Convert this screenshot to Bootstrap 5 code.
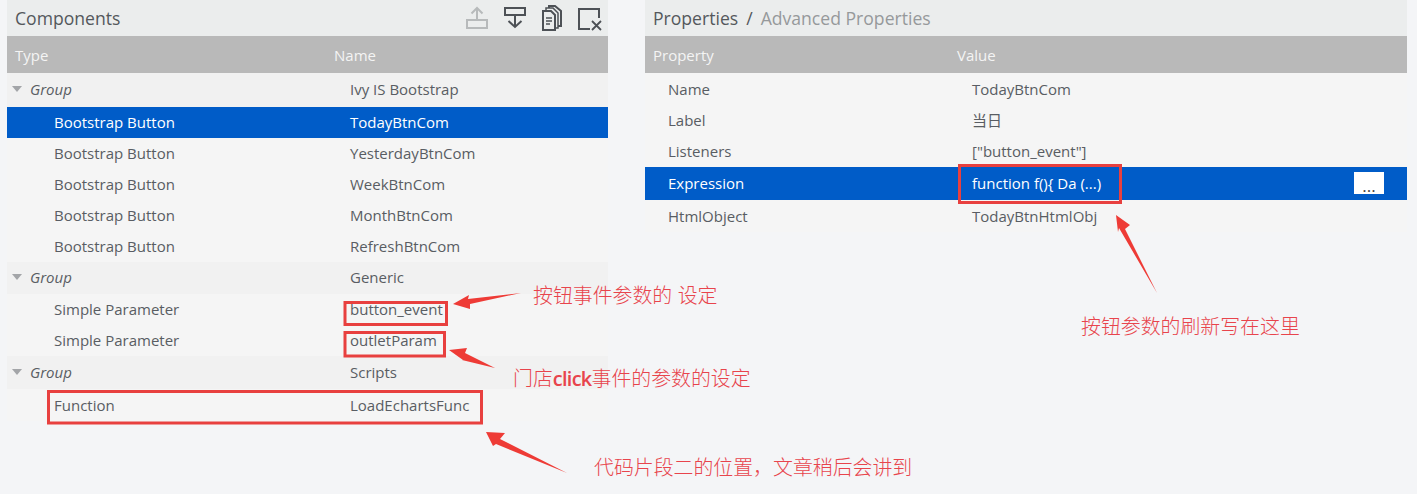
<!DOCTYPE html>
<html lang="en">
<head>
  <meta charset="UTF-8">
  <meta name="viewport" content="width=device-width, initial-scale=1.0">
  <title>Components</title>
  <link href="https://cdn.jsdelivr.net/npm/bootstrap@5.3.2/dist/css/bootstrap.min.css" rel="stylesheet">
  <style>
    html, body { height: 100%; }
    body { background: #f4f5f7; font-family: "Open Sans", "Noto Sans CJK SC", sans-serif; font-size: 15px; color: #595d63; overflow: hidden; }
    .page-wrap { width: 1417px; height: 494px; padding-left: 7px; gap: 37px; }
    .panel-left { width: 601px; }
    .panel-right { width: 762px; }
    .title-bar { height: 36px; background: #ebeded; font-size: 17.600px; color: #54585c; padding-left: 8px; }
    .crumb-sep { margin: 0 8px; }
    .crumb-muted { color: #96999b; }
    .tool-icons { gap: 14px; padding-right: 6px; }
    .head-row { height: 37px; background: #b9b9b9; color: #f4f4f4; padding-top: 2px; }
    .grid-row { background: #f5f5f5; height: 31px; padding-bottom: 1px; }
    .row-group { background: #f1f1f1; padding-bottom: 2px; }
    .row-low { padding-bottom: 0; }
    .row-tall { height: 32px; padding-bottom: 0; }
    .row-taller { height: 33px; padding-bottom: 1px; }
    .row-first { height: 34px; }
    .row-tall.row-group { padding-bottom: 2px; }
    .row-sel { background: #005cc8; color: #fff; }
    .c-left { width: 327px; flex: none; padding-left: 47px; }
    .c-group { width: 327px; flex: none; padding-left: 5px; font-style: italic; gap: 8px; }
    .c-head { width: 327px; flex: none; padding-left: 8px; }
    .caret-down { width: 0; height: 0; border-left: 5px solid transparent; border-right: 5px solid transparent; border-top: 6px solid #a3a5a8; }
    .p-head { width: 312px; flex: none; padding-left: 8px; }
    .p-left { width: 311px; flex: none; padding-left: 23px; }
    .more-btn { width: 30px; height: 22px; margin-right: 23px; background: #fff; color: #444; border: 0; border-radius: 0; padding: 5px 0 0; line-height: 1; font-size: 17px; }
    .mark-layer { position: absolute; left: 0; top: 0; pointer-events: none; }
    .note { position: absolute; color: #e8444c; font-family: "Noto Sans CJK SC", sans-serif; font-size: 19.900px; line-height: 24px; white-space: nowrap; font-weight: 300; }
    .note b { font-family: "Open Sans", sans-serif; font-weight: 600; letter-spacing: -.7px; }
    .note-a { left: 533px; top: 283px; word-spacing: 1px; }
    .note-b { left: 513px; top: 366px; }
    .note-c { left: 594px; top: 455px; }
    .note-d { left: 1081px; top: 314px; }
  </style>
</head>
<body>

<div class="page-wrap d-flex position-relative">
  <div class="panel-left">
    <div class="title-bar d-flex align-items-center justify-content-between">
      <span>Components</span>
      <div class="tool-icons d-flex align-items-center">
        <svg width="24" height="28" viewBox="0 0 24 28" fill="none" stroke="#b7babb" stroke-width="2"><rect x="2" y="16" width="20" height="8"/><path d="M12 16V4M6.500 9.500L12 4l5.500 5.500"/></svg>
        <svg width="24" height="28" viewBox="0 0 24 28" fill="none" stroke="#4d5156" stroke-width="2"><rect x="2" y="4" width="20" height="7"/><path d="M12 11v12M5.500 17L12 23l6.500-6"/></svg>
        <svg width="22" height="28" viewBox="0 0 22 28" fill="none" stroke="#4d5156" stroke-width="2"><path d="M8 4V2h6l6 5v15h-3"/><path d="M5 6V4h7l5 5v15h-3" stroke-width="1.500"/><path d="M2 7h8l4 4v15H2z"/><path d="M5 14h6M5 17h6M5 20h4" stroke-width="1.300"/></svg>
        <svg width="25" height="28" viewBox="0 0 25 28" fill="none" stroke="#4d5156" stroke-width="2"><path d="M22 14V5H2v20h11"/><path d="M15 17l9 9M24 17l-9 9" stroke-width="1.800"/></svg>
      </div>
    </div>
    <div class="head-row d-flex align-items-center"><div class="c-head">Type</div><div>Name</div></div>
    <div class="grid-row row-group row-first d-flex align-items-center"><div class="c-group d-flex align-items-center"><span class="caret-down"></span>Group</div><div class="ps-3">Ivy IS Bootstrap</div></div>
    <div class="grid-row row-sel d-flex align-items-center"><div class="c-left">Bootstrap Button</div><div class="ps-3">TodayBtnCom</div></div>
    <div class="grid-row d-flex align-items-center"><div class="c-left">Bootstrap Button</div><div class="ps-3">YesterdayBtnCom</div></div>
    <div class="grid-row d-flex align-items-center"><div class="c-left">Bootstrap Button</div><div class="ps-3">WeekBtnCom</div></div>
    <div class="grid-row d-flex align-items-center"><div class="c-left">Bootstrap Button</div><div class="ps-3">MonthBtnCom</div></div>
    <div class="grid-row d-flex align-items-center"><div class="c-left">Bootstrap Button</div><div class="ps-3">RefreshBtnCom</div></div>
    <div class="grid-row row-group row-tall d-flex align-items-center"><div class="c-group d-flex align-items-center"><span class="caret-down"></span>Group</div><div class="ps-3">Generic</div></div>
    <div class="grid-row row-low d-flex align-items-center"><div class="c-left">Simple Parameter</div><div class="ps-3">button_event</div></div>
    <div class="grid-row row-low d-flex align-items-center"><div class="c-left">Simple Parameter</div><div class="ps-3">outletParam</div></div>
    <div class="grid-row row-group row-taller d-flex align-items-center"><div class="c-group d-flex align-items-center"><span class="caret-down"></span>Group</div><div class="ps-3">Scripts</div></div>
    <div class="grid-row row-tall d-flex align-items-center"><div class="c-left">Function</div><div class="ps-3">LoadEchartsFunc</div></div>
  </div>

  <div class="panel-right">
    <div class="title-bar d-flex align-items-center"><span>Properties</span><span class="crumb-sep">/</span><span class="crumb-muted">Advanced Properties</span></div>
    <div class="head-row d-flex align-items-center"><div class="p-head">Property</div><div>Value</div></div>
    <div class="grid-row row-tall d-flex align-items-center"><div class="p-left">Name</div><div class="ps-3">TodayBtnCom</div></div>
    <div class="grid-row d-flex align-items-center"><div class="p-left">Label</div><div class="ps-3">当日</div></div>
    <div class="grid-row d-flex align-items-center"><div class="p-left">Listeners</div><div class="ps-3">["button_event"]</div></div>
    <div class="grid-row row-sel row-taller d-flex align-items-center"><div class="p-left">Expression</div><div class="ps-3">function f(){ Da (...)</div><button type="button" class="btn more-btn ms-auto">...</button></div>
    <div class="grid-row row-tall d-flex align-items-center"><div class="p-left">HtmlObject</div><div class="ps-3">TodayBtnHtmlObj</div></div>
  </div>
</div>

<!-- annotations drawn on top of the screenshot -->
<svg class="mark-layer" width="1417" height="494" fill="none" stroke="#e8403f" stroke-width="3">
  <rect x="345" y="302.500" width="101.500" height="22"/>
  <rect x="345" y="332.500" width="99.500" height="23.500"/>
  <rect x="48.500" y="391.500" width="433" height="31.500"/>
  <rect x="959.500" y="165.500" width="161" height="37"/>
  <g fill="#ee3b36" stroke="none">
    <polygon points="453,304 469,295 468,299 521,293 470,304 470,309"/>
    <polygon points="449,350 467,348 465,353 495,368 462,360 463,360"/>
    <polygon points="486,432 505,433 500,439 567,473 496,444 493,446"/>
    <polygon points="1116,215 1130,225 1125,229 1157,293 1119,228 1118,232"/>
  </g>
</svg>
<div class="note note-a">按钮事件参数的 设定</div>
<div class="note note-b">门店<b>click</b>事件的参数的设定</div>
<div class="note note-c">代码片段二的位置，文章稍后会讲到</div>
<div class="note note-d">按钮参数的刷新写在这里</div>

<script src="https://cdn.jsdelivr.net/npm/bootstrap@5.3.2/dist/js/bootstrap.bundle.min.js"></script>
</body>
</html>
